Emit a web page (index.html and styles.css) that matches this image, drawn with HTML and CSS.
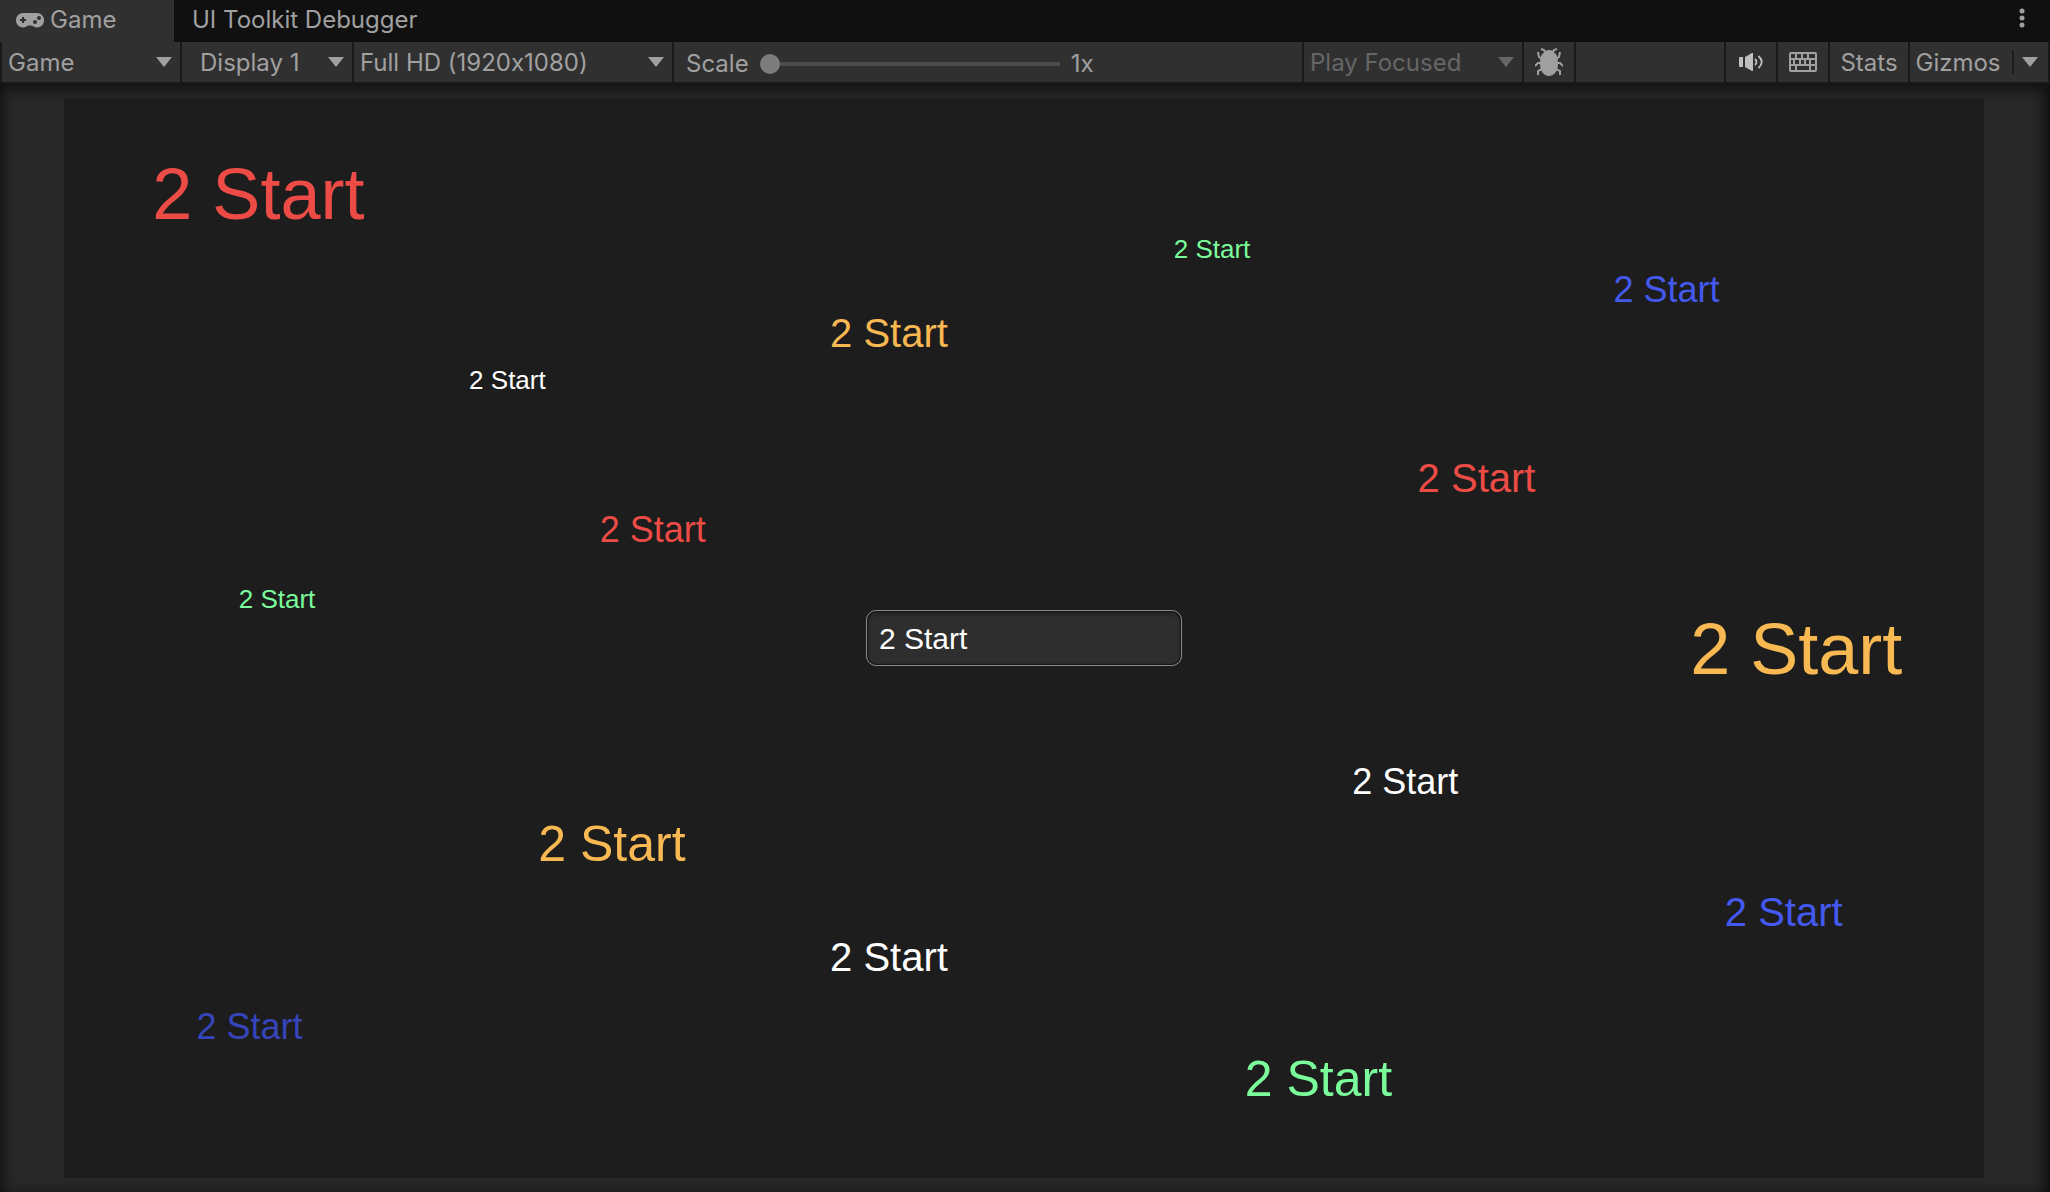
FILE: index.html
```html
<!DOCTYPE html>
<html lang="en">
<head>
<meta charset="utf-8">
<title>Game</title>
<link rel="stylesheet" href="styles.css">
</head>
<body>
<div class="window">
  <header class="tabs">
    <button class="tab tab-active" type="button">
      <svg class="pad-icon" viewBox="0 0 28 15" aria-hidden="true"><path fill="currentColor" fill-rule="evenodd" d="M7 0H21A7 7 0 0 1 28 7.500A7 7 0 0 1 17.500 13.500Q16.500 12.500 15 12.500H13Q11.500 12.500 10.500 13.500A7 7 0 0 1 0 7.500A7 7 0 0 1 7 0ZM6 4V6H4V8H6V10H8V8H10V6H8V4ZM23 3A2 2 0 1 0 23 7A2 2 0 1 0 23 3ZM19 7A2 2 0 1 0 19 11A2 2 0 1 0 19 7Z"/></svg>
      Game
    </button>
    <button class="tab" type="button">UI Toolkit Debugger</button>
    <button class="menu" type="button" aria-label="More options">
      <svg class="dots" viewBox="0 0 6 20" aria-hidden="true"><g fill="currentColor"><circle cx="3" cy="3" r="2.500"/><circle cx="3" cy="10" r="2.500"/><circle cx="3" cy="17" r="2.500"/></g></svg>
    </button>
  </header>

  <div class="toolbar">
    <div class="drop drop-view"><select aria-label="View"><option>Game</option></select></div>
    <div class="drop drop-display"><select aria-label="Display"><option>Display 1</option></select></div>
    <div class="drop drop-size"><select aria-label="Resolution"><option>Full HD (1920x1080)</option></select></div>
    <div class="scale">
      <label for="scale">Scale</label>
      <input id="scale" type="range" min="1" max="5" value="1">
      <output for="scale">1x</output>
    </div>
    <div class="drop drop-play"><select aria-label="Play mode" disabled><option>Play Focused</option></select></div>
    <button class="tool" type="button" aria-label="Debug">
      <svg class="bug-icon" viewBox="0 0 28 28" aria-hidden="true"><path fill="currentColor" d="M14 2C17 2 18.500 3 19.500 5C22.500 7 23 11 23 16C23 23 19 28 14 28S5 23 5 16C5 11 5.500 7 8.500 5C9.500 3 11 2 14 2Z"/><path fill="none" stroke="currentColor" stroke-width="2" d="M10 4L9 2L6 1M18 4L19 2L22 1M7 11L4 9L3 4M21 11L24 9L25 4M6 15H3L0 18M22 15H25L28 18M7 21L3 23V27M21 21L25 23V27"/></svg>
    </button>
    <div class="spacer"></div>
    <button class="tool tool-lit" type="button" aria-label="Mute audio">
      <svg class="sound-icon" viewBox="0 0 24 18" aria-hidden="true"><path fill="currentColor" d="M0 5Q0 4 1 4H4V14H1Q0 14 0 13ZM6 4L13 0H14V18H13L6 14Z"/><path fill="none" stroke="currentColor" stroke-width="1.800" d="M16 6Q19 9 16 12M19.500 3Q26 9 19.500 15"/></svg>
    </button>
    <button class="tool" type="button" aria-label="Keyboard shortcuts">
      <svg class="keys-icon" viewBox="0 0 28 20" aria-hidden="true"><path fill="currentColor" fill-rule="evenodd" d="M2 0H26Q28 0 28 2V18Q28 20 26 20H2Q0 20 0 18V2Q0 0 2 0ZM2 2V6H6V2ZM8 2V6H12V2ZM14 2V6H18V2ZM20 2V6H26V2ZM2 8V12H4V8ZM6 8V12H10V8ZM12 8V12H15V8ZM17 8V12H20V8ZM22 8V12H26V8ZM2 14V18H6V14ZM8 14V18H20V14ZM22 14V18H26V14Z"/></svg>
    </button>
    <button class="tool tool-stats" type="button">Stats</button>
    <div class="gizmos">
      <button class="tool gizmos-main" type="button">Gizmos</button>
      <button class="tool gizmos-more" type="button" aria-label="Gizmo options"><span class="arrow"></span></button>
    </div>
  </div>

  <main class="view">
    <div class="canvas">
      <span class="label xl red at-1">2 Start</span>
      <span class="label xs green at-2">2 Start</span>
      <span class="label sm blue at-3">2 Start</span>
      <span class="label md orange at-4">2 Start</span>
      <span class="label xs white at-5">2 Start</span>
      <span class="label md red at-6">2 Start</span>
      <span class="label sm red at-7">2 Start</span>
      <span class="label xs green at-8">2 Start</span>
      <span class="label xl orange at-9">2 Start</span>
      <span class="label sm white at-10">2 Start</span>
      <span class="label lg orange at-11">2 Start</span>
      <span class="label md blue at-12">2 Start</span>
      <span class="label md white at-13">2 Start</span>
      <span class="label sm navy at-14">2 Start</span>
      <span class="label lg green at-15">2 Start</span>
      <input class="field" type="text" value="2 Start" aria-label="Label text">
    </div>
  </main>
</div>
</body>
</html>
```
FILE: styles.css
```css
* { box-sizing: border-box; }

body {
  margin: 0;
  background: #282828;
  color: #a0a0a0;
  font: 24px/28px Inter, "Liberation Sans", sans-serif;
  font-variant-ligatures: no-contextual;
}

button, select, input {
  margin: 0;
  padding: 0;
  border: 0;
  border-radius: 0;
  background: none;
  color: inherit;
  font: inherit;
  font-variant-ligatures: inherit;
}

svg { display: block; }

.window {
  display: flex;
  flex-direction: column;
  min-height: 100vh;
}

/* Tab strip */
.tabs {
  display: flex;
  height: 42px;
  background: #101010;
}

.tab {
  display: flex;
  align-items: center;
  gap: 6px;
  padding: 0 18px 2px;
}

.tab-active {
  width: 174px;
  padding-left: 16px;
  background: #303030;
}

.pad-icon { width: 28px; height: 15px; }

.menu {
  margin-left: auto;
  padding: 0 25px 6px;
}

.dots { width: 6px; height: 20px; }

/* Toolbar */
.toolbar {
  display: flex;
  gap: 2px;
  height: 42px;
  padding: 0 2px 2px;
  background: #191919;
}

.toolbar > * { background: #303030; }

.drop {
  display: flex;
  align-items: center;
  position: relative;
}

.drop select {
  appearance: none;
  width: 100%;
  height: 40px;
  padding: 2px 36px 0 6px;
  opacity: 1;
}

.drop::after, .arrow {
  width: 16px;
  height: 10px;
  background: #a0a0a0;
  clip-path: polygon(0 0, 100% 0, 50% 100%);
}

.drop::after {
  content: "";
  position: absolute;
  right: 8px;
  pointer-events: none;
}

.drop-view { width: 178px; }
.drop-display { width: 170px; }
.drop-display select { padding-left: 18px; }
.drop-size { width: 318px; }
.drop-play { width: 218px; color: #666; }
.drop-play::after { background: #666; }

.scale {
  display: flex;
  flex: 1;
  align-items: center;
  gap: 11px;
  padding: 4px 12px 0;
}

.scale input {
  appearance: none;
  width: 300px;
  height: 20px;
  background: linear-gradient(#4e4e4e, #4e4e4e) center / 100% 4px no-repeat;
}

.scale input::-webkit-slider-thumb {
  appearance: none;
  width: 20px;
  height: 20px;
  border-radius: 50%;
  background: #7c7c7c;
}

.tool {
  display: flex;
  align-items: center;
  justify-content: center;
  width: 50px;
}

.tool-lit { color: #c0c0c0; }
.tool-stats { width: 78px; padding-top: 2px; }

.spacer { width: 148px; }

.bug-icon { width: 28px; height: 28px; }
.sound-icon { width: 24px; height: 18px; }
.keys-icon { width: 28px; height: 20px; }

.gizmos {
  display: flex;
  align-items: center;
  width: 138px;
}

.gizmos-main { width: 102px; padding: 2px 6px 0 0; }

.gizmos-more {
  width: 36px;
  height: 24px;
  padding-right: 2px;
  border-left: 2px solid #1e1e1e;
}

/* Game view */
.view {
  flex: 1;
  padding: 14px 64px;
  border-right: 2px solid #111;
  background: #282828;
  box-shadow: inset 0 8px 16px -4px #111, inset 8px 0 12px -6px #161616, inset -8px 0 12px -4px #161616;
}

.canvas {
  display: flex;
  align-items: center;
  justify-content: center;
  position: relative;
  width: 100%;
  aspect-ratio: 16 / 9;
  background: #1d1d1d;
  font-family: "Liberation Sans", Arial, sans-serif;
}

.label {
  position: absolute;
  line-height: 1;
  white-space: nowrap;
  transform: translateY(-50%);
}

.xs { font-size: 26px; }
.sm { font-size: 36px; }
.md { font-size: 40px; }
.lg { font-size: 50px; }
.xl { font-size: 72px; }

.red { color: #ed4c46; }
.green { color: #7bfc9b; }
.blue { color: #4459f0; }
.navy { color: #3645bb; }
.orange { color: #f8b852; }
.white { color: #fff; }

/* Label origins, as a share of the canvas */
.at-1 { left: 4.6%; top: 8.9%; }
.at-2 { left: 57.8%; top: 14%; }
.at-3 { left: 80.7%; top: 17.8%; }
.at-4 { left: 39.9%; top: 21.8%; }
.at-5 { left: 21.1%; top: 26.1%; }
.at-6 { left: 70.5%; top: 35.2%; }
.at-7 { left: 27.9%; top: 40%; }
.at-8 { left: 9.1%; top: 46.4%; }
.at-9 { left: 84.7%; top: 51%; }
.at-10 { left: 67.1%; top: 63.3%; }
.at-11 { left: 24.7%; top: 69.1%; }
.at-12 { left: 86.5%; top: 75.4%; }
.at-13 { left: 39.9%; top: 79.5%; }
.at-14 { left: 6.9%; top: 86%; }
.at-15 { left: 61.5%; top: 90.8%; }

.field {
  width: 316px;
  height: 56px;
  padding: 2px 12px 0;
  border: 1px solid #8c8c8c;
  border-radius: 10px;
  background: #2e2e2e;
  box-shadow: inset 0 0 1px 1px #111, inset 0 3px 4px #222;
  color: #fff;
  font-size: 30px;
}
```
